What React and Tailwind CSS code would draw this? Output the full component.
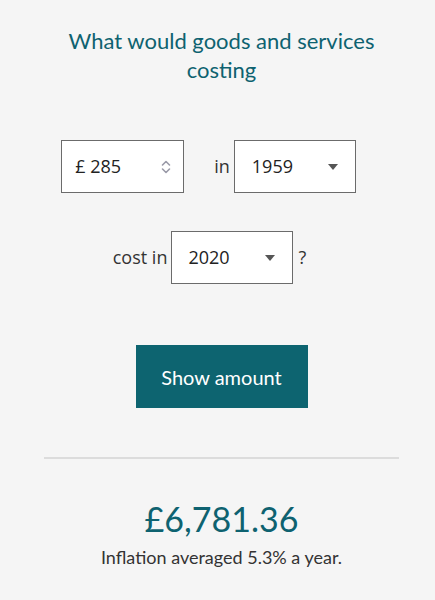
export default function App() {
  return (
    <div className="min-h-[600px] w-[435px] bg-[#f5f5f5] flex flex-col items-center pl-[8px]">
      <h1 className="mt-[26px] w-[340px] text-center text-[22px] leading-[29px] text-[#0e6270] font-['Lato',sans-serif]">
        What would goods and services costing
      </h1>

      <div className="mt-[56px] mr-[24px] flex items-center font-['Open_Sans',sans-serif] text-[18px] text-[#222]">
        <div className="ml-[-2px] w-[123px] h-[53px] border border-[#6b6b6b] bg-white flex items-center justify-between pl-[13px] pr-[12px]">
          <span>£ 285</span>
          <svg width="10" height="14" viewBox="0 0 10 14" fill="none" stroke="#9a9aa8" strokeWidth="1.6" strokeLinecap="round" strokeLinejoin="round">
            <path d="M1.5 5 L5 1.5 L8.5 5" />
            <path d="M1.5 9 L5 12.5 L8.5 9" />
          </svg>
        </div>
        <span className="ml-[30px] mr-[4px] text-[#333]">in</span>
        <div className="w-[122px] h-[53px] border border-[#6b6b6b] bg-white flex items-center justify-between pl-[17px] pr-[17px]">
          <span>1959</span>
          <svg width="10" height="6" viewBox="0 0 10 6"><path d="M0 0 H10 L5 6 Z" fill="#555" /></svg>
        </div>
      </div>

      <div className="mt-[38px] mr-[24px] flex items-center font-['Open_Sans',sans-serif] text-[18px] text-[#222]">
        <span className="mr-[4px] text-[#333]">cost in</span>
        <div className="w-[122px] h-[53px] border border-[#6b6b6b] bg-white flex items-center justify-between pl-[16px] pr-[17px]">
          <span>2020</span>
          <svg width="10" height="6" viewBox="0 0 10 6"><path d="M0 0 H10 L5 6 Z" fill="#555" /></svg>
        </div>
        <span className="ml-[5px] text-[#333]">?</span>
      </div>

      <button className="mt-[61px] w-[172px] h-[63px] bg-[#0d6470] text-white text-[20px] font-['Lato',sans-serif]">
        Show amount
      </button>

      <div className="mt-[49px] w-[355px] h-[2px] bg-[#dcdcdc]" />

      <div className="mt-[38px] text-[34px] leading-[44px] text-[#0e6270] font-['Lato',sans-serif]">£6,781.36</div>
      <div className="mt-[4px] text-[18px] leading-[24px] text-[#333] font-['Lato',sans-serif]">Inflation averaged 5.3% a year.</div>
    </div>
  );
}
